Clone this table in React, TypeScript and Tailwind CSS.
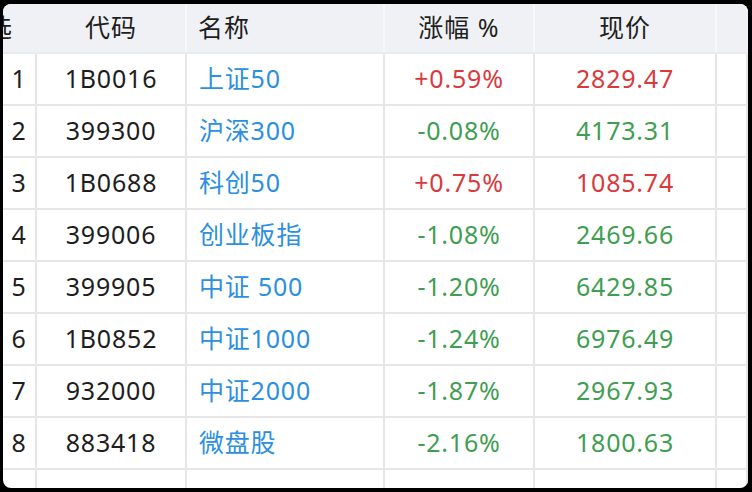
const rows = [
  { code: "1B0016", name: "上证50", pct: "+0.59%", price: "2829.47", up: true },
  { code: "399300", name: "沪深300", pct: "-0.08%", price: "4173.31", up: false },
  { code: "1B0688", name: "科创50", pct: "+0.75%", price: "1085.74", up: true },
  { code: "399006", name: "创业板指", pct: "-1.08%", price: "2469.66", up: false },
  { code: "399905", name: "中证 500", pct: "-1.20%", price: "6429.85", up: false },
  { code: "1B0852", name: "中证1000", pct: "-1.24%", price: "6976.49", up: false },
  { code: "932000", name: "中证2000", pct: "-1.87%", price: "2967.93", up: false },
  { code: "883418", name: "微盘股", pct: "-2.16%", price: "1800.63", up: false },
];

const grid = "grid grid-cols-[34px_150px_198px_150px_182px_1fr]";
const cell = "flex items-center border-r-2 border-b-2 border-[#e6e6e6] h-[52px]";

export default function App() {
  return (
    <div className="w-[752px] h-[492px] bg-black pt-[4px] pl-[3px] pr-[4px] pb-[4px]">
      <div
        className="w-full h-full bg-white rounded-[8px] overflow-hidden text-[25px] text-[#1e1e1e]"
        style={{ fontFamily: '"Noto Sans", "Noto Sans CJK SC", sans-serif' }}
      >
        <div className={`${grid} h-[50px] bg-[#eff1f4] border-b-2 border-[#e9ebee]`}>
          <div className="flex items-center overflow-hidden">
            <span className="ml-[-16px] whitespace-nowrap">选</span>
          </div>
          <div className="flex items-center justify-center border-r-2 border-[#f7f8fa] tracking-[1px]">代码</div>
          <div className="flex items-center pl-[11px] border-r-2 border-[#f7f8fa] tracking-[1px]">名称</div>
          <div className="flex items-center justify-center border-r-2 border-[#f7f8fa] tracking-[1px]">涨幅 %</div>
          <div className="flex items-center justify-center border-r-2 border-[#f7f8fa] tracking-[1px]">现价</div>
          <div />
        </div>
        {rows.map((r, i) => {
          const color = r.up ? "text-[#d93a3d]" : "text-[#3f9e51]";
          return (
            <div key={r.code} className={`${grid} tracking-[0.8px]`}>
              <div className={`${cell} justify-center`}>{i + 1}</div>
              <div className={`${cell} justify-center`}>{r.code}</div>
              <div className={`${cell} pl-[12px] text-[#2c8fdf] whitespace-pre`}>{r.name}</div>
              <div className={`${cell} justify-center ${color}`}>{r.pct}</div>
              <div className={`${cell} justify-center ${color}`}>{r.price}</div>
              <div className={`${cell} border-r-0`} />
            </div>
          );
        })}
        <div className={grid}>
          <div className={cell} />
          <div className={cell} />
          <div className={cell} />
          <div className={cell} />
          <div className={cell} />
          <div className={`${cell} border-r-0`} />
        </div>
      </div>
    </div>
  );
}
